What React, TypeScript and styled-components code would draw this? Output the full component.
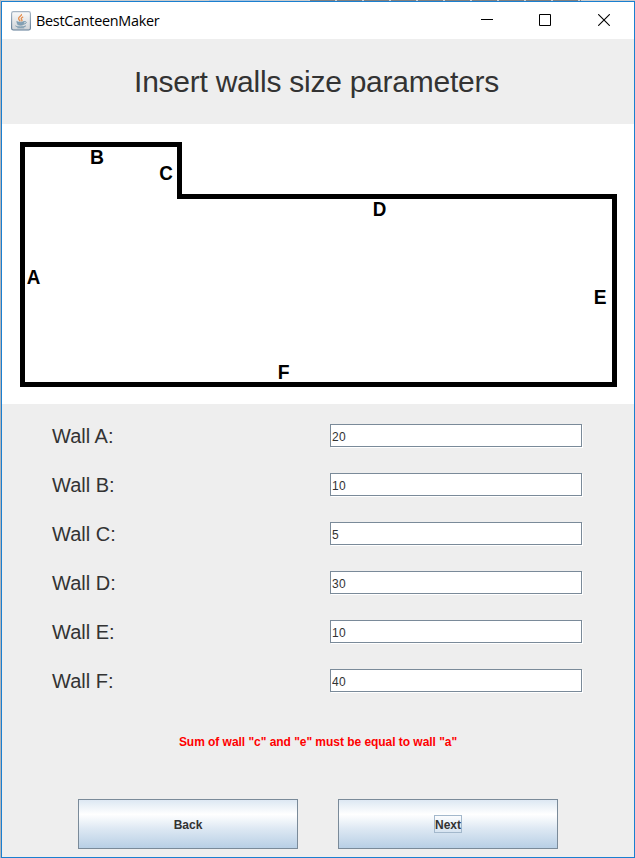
import React, { useState } from "react";
import styled, { createGlobalStyle } from "styled-components";

const GlobalStyle = createGlobalStyle`
  *, *::before, *::after { box-sizing: border-box; }
  body { margin: 0; background: #b9bcc0; overflow: hidden; }
`;

const Desktop = styled.div`
  width: 635px;
  height: 858px;
  padding-left: 1px;
  background: #b4b4b8;
  font-family: "Liberation Sans", Arial, sans-serif;
  color: #333333;
`;

const BackgroundStrip = styled.div`
  height: 1px;
  background:
    repeating-linear-gradient(90deg, #d0d0d0 0 2px, #808080 2px 27px) 307px 0 / 273px 1px no-repeat,
    linear-gradient(#a9c4de, #a9c4de) 208px 0 / 51px 1px no-repeat,
    #cccccc;
`;

const Window = styled.main`
  display: flex;
  flex-direction: column;
  height: 857px;
  border: 1px solid #1a7fd0;
  background: #eeeeee;
`;

const TitleBar = styled.header`
  display: flex;
  align-items: center;
  height: 37px;
  padding: 0 1px 0 9px;
  background: #ffffff;
`;

const AppTitle = styled.span`
  flex: 1;
  margin-left: 5px;
  font: 14.4px/20px "Open Sans", "Noto Sans", sans-serif;
  letter-spacing: -0.28px;
  color: #000000;
`;

const WindowButton = styled.button`
  display: flex;
  align-items: center;
  justify-content: center;
  width: 58.5px;
  height: 37px;
  padding: 0 0 1px;
  border: 0;
  background: transparent;
`;

const Heading = styled.h1`
  height: 85px;
  margin: 0;
  padding-right: 3px;
  text-align: center;
  font-size: 30px;
  font-weight: 400;
  letter-spacing: -0.25px;
  line-height: 86px;
`;

const Plan = styled.svg`
  display: block;
  flex: none;
  width: 632px;
  height: 280px;
  background: #ffffff;
  font: bold 21px "Liberation Sans", Arial, sans-serif;
`;

const Form = styled.form`
  display: flex;
  flex-direction: column;
  padding-top: 7px;
`;

const Row = styled.label`
  display: grid;
  grid-template-columns: 278px 252px;
  align-items: center;
  height: 49px;
  padding-left: 50px;
`;

const WallName = styled.span`
  font-size: 20px;
  line-height: 24px;
`;

const Field = styled.input`
  width: 252px;
  height: 23px;
  margin: 0;
  padding: 2px 1px 0;
  border: 1px solid #7a8a99;
  border-radius: 0;
  outline: 0;
  box-shadow: 1px 1px 0 #ffffff;
  background: #ffffff;
  color: #333333;
  font: 12px "Liberation Sans", Arial, sans-serif;
  letter-spacing: 0.3px;
`;

const ErrorText = styled.p`
  height: 20px;
  margin: 27px 0 0;
  text-align: center;
  color: #ff0000;
  font-size: 12px;
  font-weight: 700;
  letter-spacing: -0.04px;
  line-height: 20px;
`;

const Actions = styled.div`
  display: flex;
  gap: 40px;
  margin-top: 47px;
  padding-left: 76px;
`;

const ActionButton = styled.button`
  display: flex;
  align-items: center;
  justify-content: center;
  width: 220px;
  height: 50px;
  padding: 0;
  border: 1px solid #7a8a99;
  border-radius: 0;
  background: linear-gradient(#dde8f3, #ffffff 30%, #dde8f3 60%, #b8cfe5);
  color: #333333;
  font: bold 12px "Liberation Sans", Arial, sans-serif;
`;

const ButtonText = styled.span<{ $focused?: boolean }>`
  height: 18px;
  border: 1px solid ${(p) => (p.$focused ? "#a3b8cc" : "transparent")};
  line-height: 18px;
`;

const JavaIcon = () => (
  <svg width="20" height="20" viewBox="0 0 20 20" fill="none">
    <defs>
      <linearGradient id="tile" x1="0" y1="0" x2="0" y2="1">
        <stop offset="0" stopColor="#fafafa" />
        <stop offset="1" stopColor="#cfd3d7" />
      </linearGradient>
      <linearGradient id="edge" x1="0" y1="0" x2="0" y2="1">
        <stop offset="0" stopColor="#a5b4c3" />
        <stop offset="1" stopColor="#5b7893" />
      </linearGradient>
    </defs>
    <rect x=".6" y=".6" width="18.8" height="18.4" rx="1.8" fill="url(#tile)" stroke="url(#edge)" strokeWidth="1.1" />
    <path d="M10.4 3.2c1 1.5-3 2.6-2.8 4.5.1 1 1.2 1.5 1.5 2.6M12.2 5.8C9.7 6.8 10 8 10.8 8.8c.5.6.2 1.1-.3 1.6" stroke="#e58c4a" strokeWidth="1.3" />
    <path d="M5.7 10.5c1.8 1 5.6.9 7.3 0l-.5 3c-1.5 1-4.3 1-5.8 0z" fill="#83a0b5" stroke="#7193a8" strokeWidth=".6" />
    <path d="M13 10.7c3.4-.7 2.7 2.2-.2 2.3M4.4 14.8c1.2 1.5 8.8 1.4 10.6 0M6.3 16.8h7" stroke="#7193a8" strokeWidth=".9" />
  </svg>
);

const planLabels = [
  { name: "A", x: 24.8, y: 160, width: 13.6 },
  { name: "B", x: 88, y: 40, width: 14 },
  { name: "C", x: 157.2, y: 56, width: 13.6 },
  { name: "D", x: 370.8, y: 92, width: 13.6 },
  { name: "E", x: 591.8, y: 180, width: 12.8 },
  { name: "F", x: 275.8, y: 255, width: 11.8 },
];

const initialSizes: Record<string, string> = { A: "20", B: "10", C: "5", D: "30", E: "10", F: "40" };

export default function App() {
  const [sizes, setSizes] = useState(initialSizes);
  return (
    <>
      <GlobalStyle />
      <Desktop>
        <BackgroundStrip />
        <Window>
          <TitleBar>
            <JavaIcon />
            <AppTitle>BestCanteenMaker</AppTitle>
            <WindowButton aria-label="Minimize">
              <svg width="12" height="12"><path d="M0 5.5h12" stroke="#000" /></svg>
            </WindowButton>
            <WindowButton aria-label="Maximize">
              <svg width="12" height="12"><path d="M.5.5h11v11H.5z" fill="none" stroke="#000" /></svg>
            </WindowButton>
            <WindowButton aria-label="Close">
              <svg width="12" height="12"><path d="M.2.2l11.6 11.6M11.8.2L.2 11.8" stroke="#000" strokeWidth="1.1" /></svg>
            </WindowButton>
          </TitleBar>
          <Heading>Insert walls size parameters</Heading>
          <Plan viewBox="0 0 632 280">
            <path d="M20.5 20.5H177.5V72.5H612.5V260.5H20.5Z" fill="none" stroke="#000" strokeWidth="5" />
            {planLabels.map((l) => (
              <text key={l.name} x={l.x} y={l.y} textLength={l.width} lengthAdjust="spacingAndGlyphs">{l.name}</text>
            ))}
          </Plan>
          <Form onSubmit={(e) => e.preventDefault()}>
            {Object.keys(sizes).map((name) => (
              <Row key={name}>
                <WallName>Wall {name}:</WallName>
                <Field value={sizes[name]} onChange={(e) => setSizes({ ...sizes, [name]: e.target.value })} />
              </Row>
            ))}
            <ErrorText>Sum of wall "c" and "e" must be equal to wall "a"</ErrorText>
            <Actions>
              <ActionButton type="button"><ButtonText>Back</ButtonText></ActionButton>
              <ActionButton type="submit"><ButtonText $focused>Next</ButtonText></ActionButton>
            </Actions>
          </Form>
        </Window>
      </Desktop>
    </>
  );
}
